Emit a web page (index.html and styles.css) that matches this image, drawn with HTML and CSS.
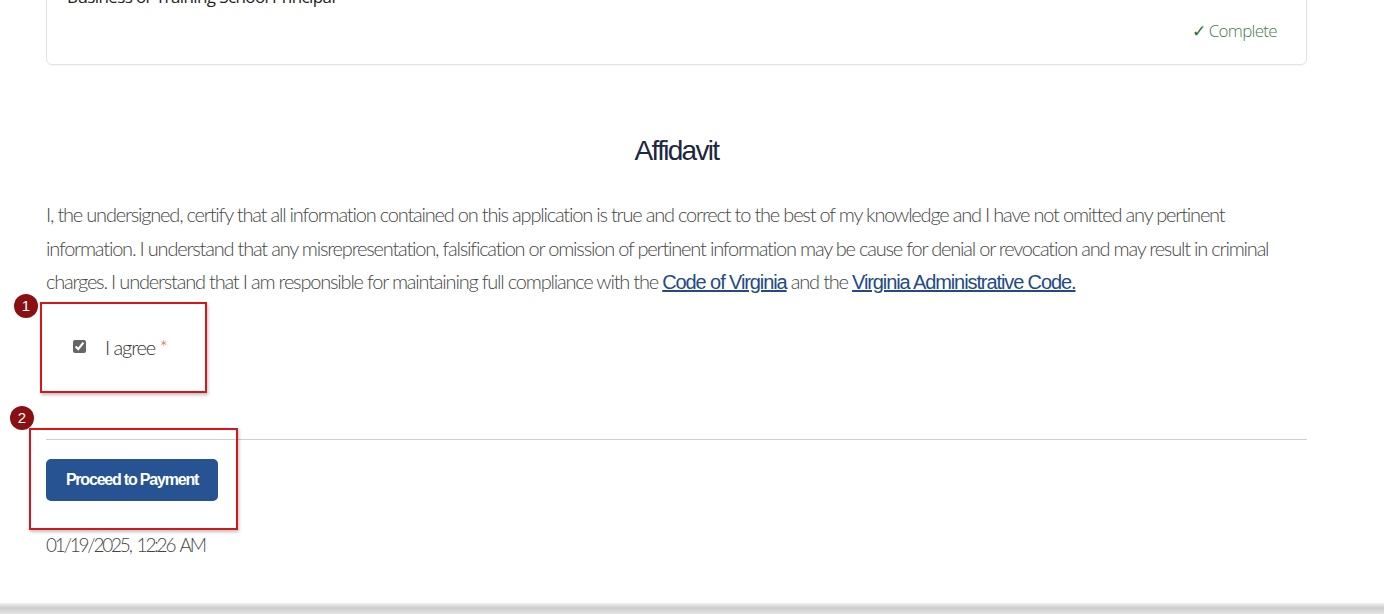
FILE: index.html
```html
<!DOCTYPE html>
<html lang="en">
  <head>
    <meta charset="utf-8" />
    <meta name="viewport" content="width=device-width, initial-scale=1" />
    <title>Application | Affidavit</title>
    <link rel="stylesheet" href="styles.css">
</head>
<body>
    <div class="page">
        <!--last item of the checklist, scrolled mostly out of view-->
        <div class="card">
            <div class="card-title">Business or Training School Principal</div>
            <div class="card-status"><span class="check">&#10003;</span> Complete</div>
        </div>

        <h2 class="heading">Affidavit</h2>
        <p class="affidavit">I, the undersigned, certify that all information contained on this application is true and correct to the best of my knowledge and I have not omitted any pertinent information. I understand that any misrepresentation, falsification or omission of pertinent information may be cause for denial or revocation and may result in criminal charges. I understand that I am responsible for maintaining full compliance with the <a href="#">Code of Virginia</a> and the <a href="#">Virginia Administrative Code.</a></p>

        <label class="agree"><input type="checkbox" checked> <span>I agree <span class="req">*</span></span></label>

        <hr class="divider">

        <button type="button" class="pay-btn">Proceed to Payment</button>
        <div class="stamp">01/19/2025, 12:26 AM</div>

        <!--screenshot annotations-->
        <div class="mark mark-1"></div>
        <div class="badge badge-1">1</div>
        <div class="mark mark-2"></div>
        <div class="badge badge-2">2</div>
    </div>
    <div class="bottom-bar"></div>
</body>
</html>
```

FILE: styles.css
```css
body{
    margin:0;
    height:100vh;
    display:flex;
    flex-direction:column;
    font-family:Lato, "Open Sans", sans-serif;
    font-weight:300;
    color:#444;
    background:#fff;
    overflow:hidden;
}
.page{
    position:relative;
    flex:1;
    width:1261px;
    margin-left:46px;
}
.card{
    margin-top:-36px;
    border:1px solid #e2e2e2;
    border-radius:6px;
    padding:20px 29px 21px 20px;
    box-shadow:0 1px 2px rgba(0,0,0,0.04);
}
.card-title{
    font-family:"Open Sans", sans-serif;
    font-size:17px;
    line-height:24px;
    font-weight:400;
    color:#222;
    letter-spacing:-0.6px;
}
.card-status{
    margin-top:10px;
    text-align:right;
    font-family:"Open Sans", sans-serif;
    font-size:17px;
    line-height:24px;
    color:#4b7a55;
    letter-spacing:-0.7px;
}
.card-status .check{
    color:#2f6a35;
    font-weight:400;
}
.heading{
    margin:69px 0 0;
    text-align:center;
    font-family:"Liberation Sans", Arial, sans-serif;
    font-weight:400;
    font-size:28px;
    line-height:34px;
    letter-spacing:-1.7px;
    color:#1c2740;
}
.affidavit{
    margin:30px 0 0;
    font-size:20px;
    line-height:33.5px;
    letter-spacing:-1.2px;
    color:#474747;
}
.affidavit a{
    font-family:"Liberation Sans", Arial, sans-serif;
    font-weight:400;
    font-size:20px;
    line-height:1;
    letter-spacing:-1.1px;
    color:#234a86;
    text-decoration:underline;
}
.agree{
    display:flex;
    align-items:center;
    margin-top:33px;
    padding-left:27px;
    height:30px;
    font-size:20px;
    letter-spacing:-1.1px;
    color:#333;
}
.agree input{
    width:13px;
    height:13px;
    margin:0 19px 0 0;
    accent-color:#666;
}
.agree .req{
    color:#d9534f;
}
.divider{
    margin:77px 0 0;
    border:0;
    border-top:1px solid #cfcfcf;
}
.pay-btn{
    display:block;
    margin-top:19px;
    width:172px;
    height:42px;
    border:0;
    border-radius:5px;
    background-color:#275392;
    color:#fff;
    font-family:"Liberation Sans", Arial, sans-serif;
    font-weight:700;
    font-size:16px;
    letter-spacing:-1.2px;
    cursor:pointer;
}
.stamp{
    margin-top:30px;
    font-size:19px;
    line-height:28px;
    letter-spacing:-2.2px;
    word-spacing:3px;
    color:#444;
}
.mark{
    position:absolute;
    border:2px solid #d3171b;
    box-shadow:1px 2px 3px rgba(0,0,0,0.25);
}
.mark-1{
    left:-6px;
    top:302px;
    width:163px;
    height:87px;
}
.mark-2{
    left:-17px;
    top:428px;
    width:205px;
    height:98px;
}
.badge{
    position:absolute;
    width:24px;
    height:24px;
    border-radius:50%;
    background:#8a0f12;
    color:#fff;
    font-family:"Liberation Sans", Arial, sans-serif;
    font-weight:400;
    font-size:15px;
    line-height:24px;
    text-align:center;
}
.badge-1{
    left:-32px;
    top:294px;
}
.badge-2{
    left:-36px;
    top:406px;
}
.bottom-bar{
    height:11px;
    flex:none;
    background:linear-gradient(#f2f2f2, #cdcdcd 45%, #e4e4e4);
}
```
